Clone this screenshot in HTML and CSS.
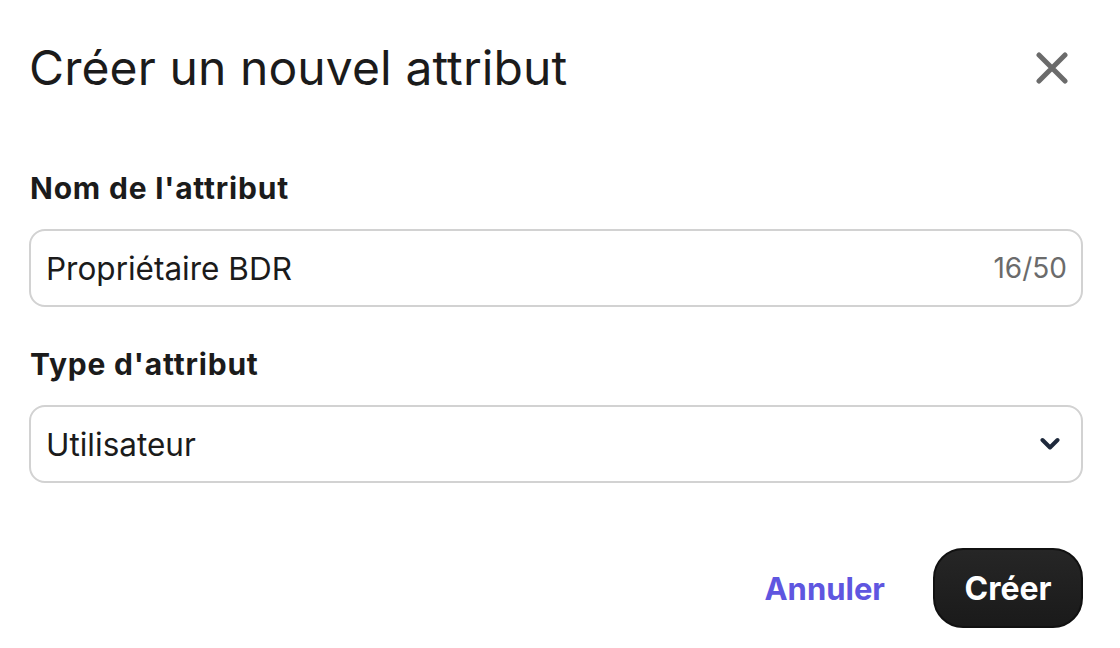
FILE: index.html
```html
<!DOCTYPE html>
<html lang="fr">
<head>
<meta charset="utf-8">
<title>Créer un nouvel attribut</title>
<link rel="stylesheet" href="styles.css">
</head>
<body>
<div class="dialog">
  <div class="header">
    <h1 class="title">Créer un nouvel attribut</h1>
    <button class="close" aria-label="Fermer">
      <svg width="32" height="32" viewBox="0 0 32 32"><path d="M3 3 L29 29 M29 3 L3 29" stroke="#6b6b6b" stroke-width="5" stroke-linecap="round" fill="none"/></svg>
    </button>
  </div>
  <div class="field first">
    <label class="label">Nom de l'attribut</label>
    <div class="box">
      <span class="value">Propriétaire BDR</span>
      <span class="counter">16/50</span>
    </div>
  </div>
  <div class="field">
    <label class="label">Type d'attribut</label>
    <div class="box">
      <span class="value">Utilisateur</span>
      <svg class="chev" width="20" height="14" viewBox="0 0 20 14"><path d="M2.5 3 L10 10.5 L17.5 3" stroke="#1e293b" stroke-width="4" stroke-linecap="round" stroke-linejoin="round" fill="none"/></svg>
    </div>
  </div>
  <div class="actions">
    <button class="cancel">Annuler</button>
    <button class="create">Créer</button>
  </div>
</div>
</body>
</html>
```
FILE: styles.css
```css
html, body {
  margin: 0;
  padding: 0;
  background: #ffffff;
}
body {
  font-family: Inter, "Noto Sans", sans-serif;
  color: #1b1b1b;
}
.dialog {
  padding: 39px 37px 0 29px;
}
.header {
  display: flex;
  justify-content: space-between;
  align-items: center;
  height: 58px;
}
.title {
  margin: 0;
  font-size: 48px;
  font-weight: 400;
  line-height: 58px;
  letter-spacing: 0.1px;
  color: #1b1b1b;
}
.close {
  border: 0;
  background: none;
  padding: 0;
  margin-right: 15px;
  width: 32px;
  height: 32px;
  display: flex;
}
.field {
  display: flex;
  flex-direction: column;
}
.field.first {
  margin-top: 71px;
}
.field + .field {
  margin-top: 37px;
}
.label {
  font-size: 30px;
  font-weight: 700;
  letter-spacing: 0.8px;
  line-height: 40px;
  color: #1b1b1b;
  margin-bottom: 21px;
  margin-left: 1px;
}
.box {
  height: 74px;
  border: 2px solid #d2d2d2;
  border-radius: 16px;
  display: flex;
  align-items: center;
  justify-content: space-between;
  padding: 0 14px 0 15px;
}
.value {
  font-size: 31.5px;
  color: #1b1b1b;
}
.counter {
  font-size: 28px;
  color: #6b6b6b;
}
.chev {
  margin-right: 7px;
}
.actions {
  display: flex;
  justify-content: flex-end;
  align-items: center;
  gap: 48px;
  margin-top: 65px;
}
.cancel {
  border: 0;
  background: none;
  padding: 0;
  font-family: Inter, sans-serif;
  font-size: 31px;
  font-weight: 700;
  color: #5f56e0;
}
.create {
  border: 2px solid #111;
  background: linear-gradient(#262626, #1a1a1a);
  color: #fff;
  font-family: Inter, sans-serif;
  font-size: 32px;
  font-weight: 700;
  height: 80px;
  width: 150px;
  border-radius: 30px;
}
```
